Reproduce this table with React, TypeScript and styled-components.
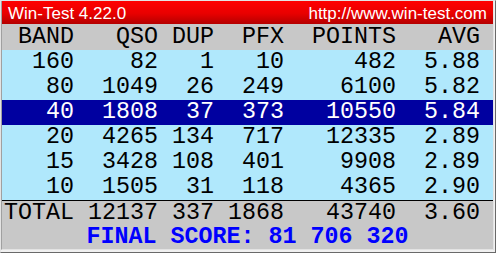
import styled, { createGlobalStyle } from "styled-components";

const GlobalStyle = createGlobalStyle`
  html, body {
    margin: 0;
    padding: 0;
    background: #ffffff;
  }
`;

const Frame = styled.div`
  width: 496px;
  height: 253px;
  box-sizing: border-box;
  border-style: solid;
  border-width: 1px;
  border-color: #e3e3e3 #696969 #696969 #e3e3e3;
  background: #f0f0f0;
  display: flex;
`;

const Inner = styled.div`
  flex: 1;
  box-sizing: border-box;
  margin: 0 1px 2px 0;
  border-left: 1px solid #a0a0a0;
  border-right: 1px solid #e3e3e3;
  border-bottom: 1px solid #e3e3e3;
  display: flex;
  flex-direction: column;
`;

const TitleBar = styled.div`
  height: 21px;
  padding: 2px 6px 0 6px;
  display: flex;
  justify-content: space-between;
  background: linear-gradient(to bottom, #ff0000 0%, #e80000 55%, #b40000 100%);
  color: #ffffff;
  font-family: "Liberation Sans", Arial, sans-serif;
  font-size: 17px;
  line-height: 21px;
`;

const Table = styled.div`
  font-family: "Courier New", Courier, "Nimbus Mono PS", "Nimbus Mono L", FreeMono,
    "Liberation Mono", monospace;
  font-size: 23.33px;
  color: #000000;
`;

const Row = styled.div<{ $bg: string; $fg?: string; $h: number }>`
  display: grid;
  grid-template-columns: 70px 84px 56px 70px 112px 84px;
  padding-left: 2px;
  height: ${(p) => p.$h}px;
  line-height: ${(p) => p.$h}px;
  background: ${(p) => p.$bg};
  color: ${(p) => p.$fg || "#000000"};
  white-space: pre;
  span {
    text-align: right;
  }
`;

const Rule = styled.div`
  height: 1px;
  background: #000000;
`;

const Score = styled.div`
  height: 23px;
  line-height: 22px;
  background: #c8c8c8;
  color: #0000ff;
  font-weight: 700;
  text-align: center;
  white-space: pre;
`;

const bands = [
  ["160", "82", "1", "10", "482", "5.88"],
  ["80", "1049", "26", "249", "6100", "5.82"],
  ["40", "1808", "37", "373", "10550", "5.84"],
  ["20", "4265", "134", "717", "12335", "2.89"],
  ["15", "3428", "108", "401", "9908", "2.89"],
  ["10", "1505", "31", "118", "4365", "2.90"],
];

const header = ["BAND", "QSO", "DUP", "PFX", "POINTS", "AVG"];
const total = ["TOTAL", "12137", "337", "1868", "43740", "3.60"];

function App() {
  return (
    <>
      <GlobalStyle />
      <Frame>
        <Inner>
          <TitleBar>
            <span>Win-Test 4.22.0</span>
            <span>http://www.win-test.com</span>
          </TitleBar>
          <Table>
            <Row $bg="#c8c8c8" $h={26}>
              {header.map((h) => (
                <span key={h}>{h}</span>
              ))}
            </Row>
            {bands.map((b) => {
              const active = b[0] === "40";
              return (
                <Row
                  key={b[0]}
                  $h={25}
                  $bg={active ? "#0000a0" : "#b0e8fc"}
                  $fg={active ? "#ffffff" : undefined}
                >
                  {b.map((v, i) => (
                    <span key={i}>{v}</span>
                  ))}
                </Row>
              );
            })}
            <Rule />
            <Row $bg="#c8c8c8" $h={25}>
              {total.map((v, i) => (
                <span key={i}>{v}</span>
              ))}
            </Row>
            <Score>FINAL SCORE: 81 706 320</Score>
          </Table>
        </Inner>
      </Frame>
    </>
  );
}

export default App;
